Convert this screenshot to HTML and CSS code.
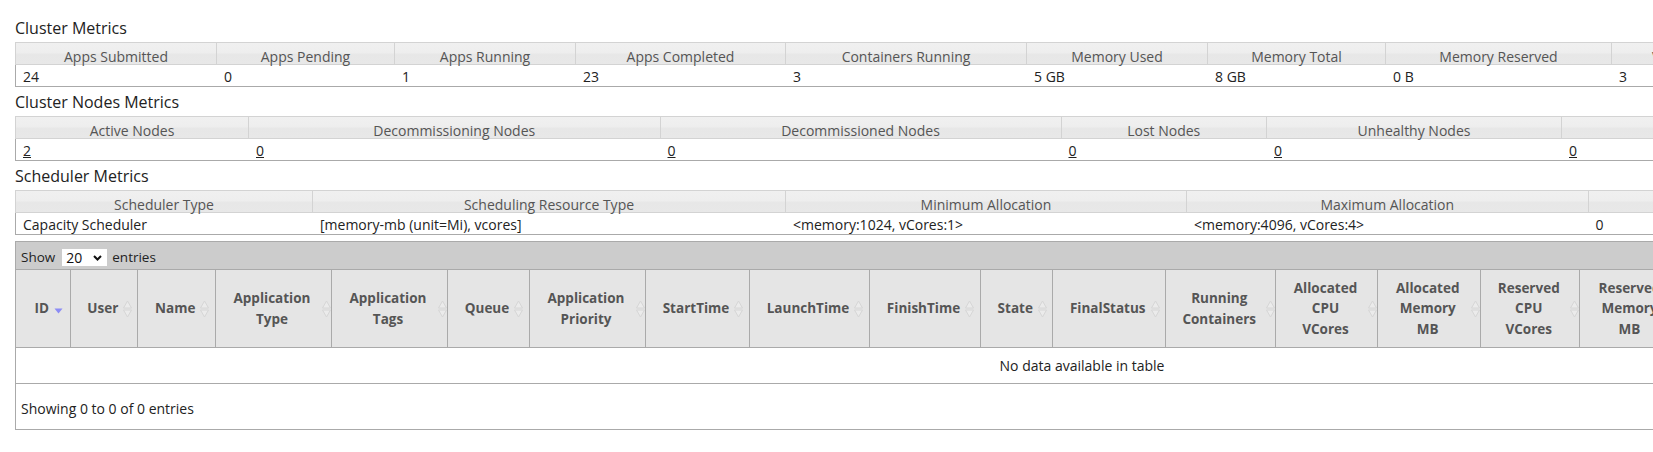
FILE: index.html
```html
<!DOCTYPE html>
<html lang="en">
<head>
<meta charset="utf-8">
<title>All Applications</title>
<link rel="stylesheet" href="styles.css">
</head>
<body>
<main class="page">
  <section class="metrics">
    <h3 class="section-title">Cluster Metrics</h3>
    <div class="info t-cluster">
      <div class="th first">Apps Submitted</div>
      <div class="th">Apps Pending</div>
      <div class="th">Apps Running</div>
      <div class="th">Apps Completed</div>
      <div class="th">Containers Running</div>
      <div class="th">Memory Used</div>
      <div class="th">Memory Total</div>
      <div class="th">Memory Reserved</div>
      <div class="th">VCores Used</div>
      <div class="th">VCores Total</div>
      <div class="th">VCores Reserved</div>
      <div class="td first">24</div>
      <div class="td">0</div>
      <div class="td">1</div>
      <div class="td">23</div>
      <div class="td">3</div>
      <div class="td">5 GB</div>
      <div class="td">8 GB</div>
      <div class="td">0 B</div>
      <div class="td">3</div>
      <div class="td">8</div>
      <div class="td">0</div>
    </div>
  </section>

  <section class="metrics">
    <h3 class="section-title">Cluster Nodes Metrics</h3>
    <div class="info t-nodes">
      <div class="th first">Active Nodes</div>
      <div class="th">Decommissioning Nodes</div>
      <div class="th">Decommissioned Nodes</div>
      <div class="th">Lost Nodes</div>
      <div class="th">Unhealthy Nodes</div>
      <div class="th">Rebooted Nodes</div>
      <div class="th">Shutdown Nodes</div>
      <div class="td first"><a href="#">2</a></div>
      <div class="td"><a href="#">0</a></div>
      <div class="td"><a href="#">0</a></div>
      <div class="td"><a href="#">0</a></div>
      <div class="td"><a href="#">0</a></div>
      <div class="td"><a href="#">0</a></div>
      <div class="td"><a href="#">0</a></div>
    </div>
  </section>

  <section class="metrics">
    <h3 class="section-title">Scheduler Metrics</h3>
    <div class="info t-sched">
      <div class="th first">Scheduler Type</div>
      <div class="th">Scheduling Resource Type</div>
      <div class="th">Minimum Allocation</div>
      <div class="th">Maximum Allocation</div>
      <div class="th">Maximum Cluster Application Priority</div>
      <div class="td first">Capacity Scheduler</div>
      <div class="td">[memory-mb (unit=Mi), vcores]</div>
      <div class="td">&lt;memory:1024, vCores:1&gt;</div>
      <div class="td">&lt;memory:4096, vCores:4&gt;</div>
      <div class="td">0</div>
    </div>
  </section>

  <div class="dt-wrapper">
    <div class="dt-toolbar">
      <label class="dt-length">Show
        <span class="select-box">
          <select><option>20</option><option>40</option><option>60</option></select>
          <svg class="chev" width="9" height="6" viewBox="0 0 9 6"><path d="M1 1 L4.5 4.5 L8 1" fill="none" stroke="#111" stroke-width="2"/></svg>
        </span>
        entries</label>
    </div>
    <div class="dt-head">
      <div class="dh"><span class="sort">ID<svg class="ico desc" width="9" height="6" viewBox="0 0 9 6"><path d="M0.5 0.5 H8.5 L4.5 5.5 Z" fill="#8c8cf5"/></svg></span></div>
      <div class="dh"><span class="sort">User<svg class="ico both" width="9" height="18" viewBox="0 0 9 18"><path d="M4.5 1 L8.5 8 H0.5 Z M0.5 10 H8.5 L4.5 17 Z" fill="#ebebeb" stroke="#d6d6d6" stroke-width="1"/></svg></span></div>
      <div class="dh"><span class="sort">Name<svg class="ico both" width="9" height="18" viewBox="0 0 9 18"><path d="M4.5 1 L8.5 8 H0.5 Z M0.5 10 H8.5 L4.5 17 Z" fill="#ebebeb" stroke="#d6d6d6" stroke-width="1"/></svg></span></div>
      <div class="dh"><span class="sort">Application Type<svg class="ico both" width="9" height="18" viewBox="0 0 9 18"><path d="M4.5 1 L8.5 8 H0.5 Z M0.5 10 H8.5 L4.5 17 Z" fill="#ebebeb" stroke="#d6d6d6" stroke-width="1"/></svg></span></div>
      <div class="dh"><span class="sort">Application Tags<svg class="ico both" width="9" height="18" viewBox="0 0 9 18"><path d="M4.5 1 L8.5 8 H0.5 Z M0.5 10 H8.5 L4.5 17 Z" fill="#ebebeb" stroke="#d6d6d6" stroke-width="1"/></svg></span></div>
      <div class="dh"><span class="sort">Queue<svg class="ico both" width="9" height="18" viewBox="0 0 9 18"><path d="M4.5 1 L8.5 8 H0.5 Z M0.5 10 H8.5 L4.5 17 Z" fill="#ebebeb" stroke="#d6d6d6" stroke-width="1"/></svg></span></div>
      <div class="dh"><span class="sort">Application Priority<svg class="ico both" width="9" height="18" viewBox="0 0 9 18"><path d="M4.5 1 L8.5 8 H0.5 Z M0.5 10 H8.5 L4.5 17 Z" fill="#ebebeb" stroke="#d6d6d6" stroke-width="1"/></svg></span></div>
      <div class="dh"><span class="sort">StartTime<svg class="ico both" width="9" height="18" viewBox="0 0 9 18"><path d="M4.5 1 L8.5 8 H0.5 Z M0.5 10 H8.5 L4.5 17 Z" fill="#ebebeb" stroke="#d6d6d6" stroke-width="1"/></svg></span></div>
      <div class="dh"><span class="sort">LaunchTime<svg class="ico both" width="9" height="18" viewBox="0 0 9 18"><path d="M4.5 1 L8.5 8 H0.5 Z M0.5 10 H8.5 L4.5 17 Z" fill="#ebebeb" stroke="#d6d6d6" stroke-width="1"/></svg></span></div>
      <div class="dh"><span class="sort">FinishTime<svg class="ico both" width="9" height="18" viewBox="0 0 9 18"><path d="M4.5 1 L8.5 8 H0.5 Z M0.5 10 H8.5 L4.5 17 Z" fill="#ebebeb" stroke="#d6d6d6" stroke-width="1"/></svg></span></div>
      <div class="dh"><span class="sort">State<svg class="ico both" width="9" height="18" viewBox="0 0 9 18"><path d="M4.5 1 L8.5 8 H0.5 Z M0.5 10 H8.5 L4.5 17 Z" fill="#ebebeb" stroke="#d6d6d6" stroke-width="1"/></svg></span></div>
      <div class="dh"><span class="sort">FinalStatus<svg class="ico both" width="9" height="18" viewBox="0 0 9 18"><path d="M4.5 1 L8.5 8 H0.5 Z M0.5 10 H8.5 L4.5 17 Z" fill="#ebebeb" stroke="#d6d6d6" stroke-width="1"/></svg></span></div>
      <div class="dh"><span class="sort">Running Containers<svg class="ico both" width="9" height="18" viewBox="0 0 9 18"><path d="M4.5 1 L8.5 8 H0.5 Z M0.5 10 H8.5 L4.5 17 Z" fill="#ebebeb" stroke="#d6d6d6" stroke-width="1"/></svg></span></div>
      <div class="dh"><span class="sort">Allocated CPU VCores<svg class="ico both" width="9" height="18" viewBox="0 0 9 18"><path d="M4.5 1 L8.5 8 H0.5 Z M0.5 10 H8.5 L4.5 17 Z" fill="#ebebeb" stroke="#d6d6d6" stroke-width="1"/></svg></span></div>
      <div class="dh"><span class="sort">Allocated Memory MB<svg class="ico both" width="9" height="18" viewBox="0 0 9 18"><path d="M4.5 1 L8.5 8 H0.5 Z M0.5 10 H8.5 L4.5 17 Z" fill="#ebebeb" stroke="#d6d6d6" stroke-width="1"/></svg></span></div>
      <div class="dh"><span class="sort">Reserved CPU VCores<svg class="ico both" width="9" height="18" viewBox="0 0 9 18"><path d="M4.5 1 L8.5 8 H0.5 Z M0.5 10 H8.5 L4.5 17 Z" fill="#ebebeb" stroke="#d6d6d6" stroke-width="1"/></svg></span></div>
      <div class="dh"><span class="sort">Reserved Memory MB<svg class="ico both" width="9" height="18" viewBox="0 0 9 18"><path d="M4.5 1 L8.5 8 H0.5 Z M0.5 10 H8.5 L4.5 17 Z" fill="#ebebeb" stroke="#d6d6d6" stroke-width="1"/></svg></span></div>
      <div class="dh"><span class="sort">% of Queue<svg class="ico both" width="9" height="18" viewBox="0 0 9 18"><path d="M4.5 1 L8.5 8 H0.5 Z M0.5 10 H8.5 L4.5 17 Z" fill="#ebebeb" stroke="#d6d6d6" stroke-width="1"/></svg></span></div>
      <div class="dh"><span class="sort">% of Cluster<svg class="ico both" width="9" height="18" viewBox="0 0 9 18"><path d="M4.5 1 L8.5 8 H0.5 Z M0.5 10 H8.5 L4.5 17 Z" fill="#ebebeb" stroke="#d6d6d6" stroke-width="1"/></svg></span></div>
      <div class="dh"><span class="sort">Progress<svg class="ico both" width="9" height="18" viewBox="0 0 9 18"><path d="M4.5 1 L8.5 8 H0.5 Z M0.5 10 H8.5 L4.5 17 Z" fill="#ebebeb" stroke="#d6d6d6" stroke-width="1"/></svg></span></div>
      <div class="dh"><span class="sort">Tracking UI<svg class="ico both" width="9" height="18" viewBox="0 0 9 18"><path d="M4.5 1 L8.5 8 H0.5 Z M0.5 10 H8.5 L4.5 17 Z" fill="#ebebeb" stroke="#d6d6d6" stroke-width="1"/></svg></span></div>
      <div class="dh"><span class="sort">Blacklisted Nodes<svg class="ico both" width="9" height="18" viewBox="0 0 9 18"><path d="M4.5 1 L8.5 8 H0.5 Z M0.5 10 H8.5 L4.5 17 Z" fill="#ebebeb" stroke="#d6d6d6" stroke-width="1"/></svg></span></div>
    </div>
    <div class="dt-empty">No data available in table</div>
    <div class="dt-footer">Showing 0 to 0 of 0 entries</div>
  </div>
</main>
</body>
</html>
```

FILE: styles.css
```css
* { box-sizing: border-box; }

html, body {
  margin: 0;
  padding: 0;
  overflow: hidden;
  background: #fff;
}

body {
  font-family: "Open Sans", "Noto Sans", "Liberation Sans", sans-serif;
  font-size: 14px;
  color: #222;
}

.page {
  width: 2400px;
  padding: 13px 0 0 15px;
}

.section-title {
  margin: 0;
  height: 29px;
  font-size: 16px;
  font-weight: normal;
  line-height: 30px;
  color: #222;
}

.info {
  display: grid;
  width: max-content;
}

.t-cluster { grid-template-columns: 202px 178px 181px 210px 241px 181px 178px 226px 164px 164px 180px; }
.t-nodes   { grid-template-columns: 234px 411.5px 401px 205.5px 295px 300px 300px; }
.t-sched   { grid-template-columns: 298px 473px 401px 401.5px 560px; }

.th {
  height: 23px;
  border: 1px solid #d3d3d3;
  border-left: 0;
  background: linear-gradient(#f0f0f0 0%, #eeeeee 45%, #e7e7e7 55%, #e8e8e8 100%);
  color: #555;
  font-size: 14px;
  line-height: 27px;
  text-align: center;
  white-space: nowrap;
}

.th.first { border-left: 1px solid #d3d3d3; }

.td {
  height: 22px;
  border-bottom: 1px solid #aaa;
  padding-left: 7px;
  font-size: 14px;
  line-height: 24px;
  white-space: nowrap;
}

.td.first { border-left: 1px solid #aaa; }

.td a {
  color: #222;
  text-decoration: underline;
}

/* DataTable */
.dt-wrapper {
  margin-top: 6px;
  width: 2133px;
  border-left: 1px solid #aaa;
}

.dt-toolbar {
  height: 28px;
  display: flex;
  align-items: center;
  padding: 3px 5px 0;
  background: #cccccc;
  border-top: 1px solid #aaa;
  font-size: 13.5px;
  color: #222;
}

.dt-length {
  display: flex;
  align-items: center;
}

.select-box {
  position: relative;
  display: inline-block;
  height: 17px;
  margin: 0 5px 0 7px;
}

.select-box select {
  display: block;
  appearance: none;
  -webkit-appearance: none;
  border: 0;
  margin: 0;
  height: 17px;
  width: 45px;
  padding: 0 0 0 4px;
  background: #fff;
  font-family: inherit;
  font-size: 14px;
  line-height: 17px;
  color: #111;
}

.chev {
  position: absolute;
  right: 5px;
  top: 6px;
  pointer-events: none;
}

.dt-head {
  display: grid;
  grid-template-columns: 54.5px 67.5px 77.5px 116px 116px 82px 116px 104px 120px 111px 72.5px 112.5px 110.5px 102px 102.5px 99.5px 102px 90px 95px 92px 95px 95px;
  background: #e5e5e5;
  border-top: 1px solid #aaa;
  border-bottom: 1px solid #aaa;
}

.dh {
  height: 77px;
  display: flex;
  align-items: center;
  justify-content: center;
  padding: 0 14px 0 12px;
  border-right: 1px solid #aaa;
  font-size: 13.5px;
  font-weight: bold;
  line-height: 20.5px;
  color: #555;
  text-align: center;
}

.sort {
  position: relative;
  display: inline-block;
}

.ico {
  position: absolute;
  left: calc(100% + 5px);
  top: 50%;
}

.ico.both { margin-top: -9px; }
.ico.desc { margin-top: -1px; }

.dt-empty {
  height: 36px;
  display: flex;
  align-items: center;
  justify-content: center;
  border-bottom: 1px solid #aaa;
  font-size: 14px;
}

.dt-footer {
  height: 46px;
  padding: 15px 0 0 5px;
  border-bottom: 1px solid #aaa;
  font-size: 14px;
  line-height: 20px;
}
```
